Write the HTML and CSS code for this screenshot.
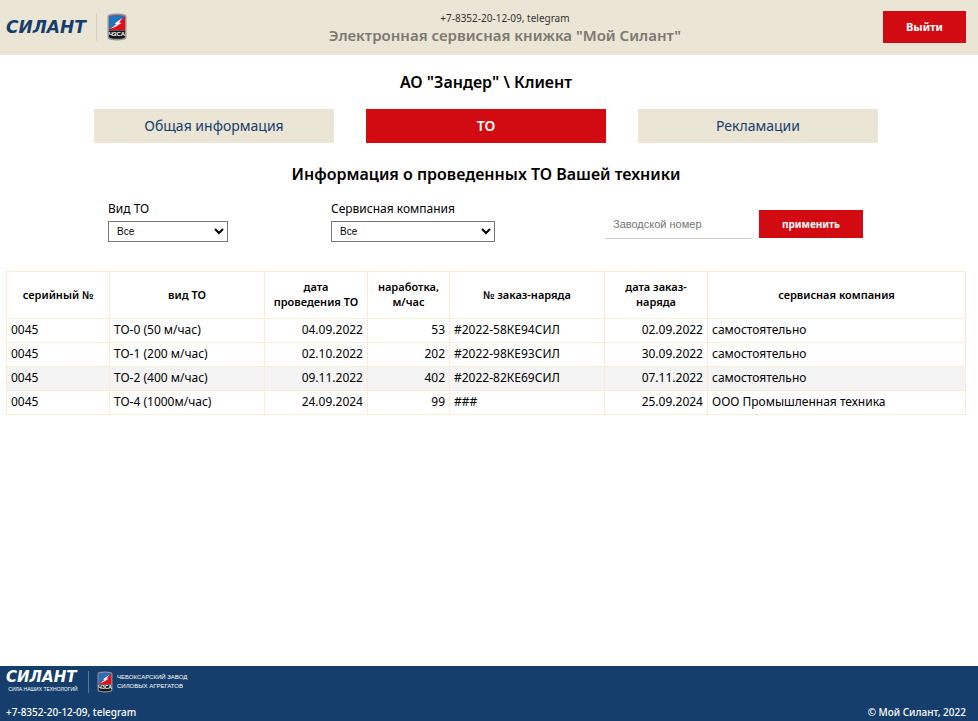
FILE: index.html
```html
<!DOCTYPE html>
<html lang="ru">
<head>
<meta charset="utf-8">
<meta name="viewport" content="width=device-width, initial-scale=1">
<title>Мой Силант</title>
<link rel="stylesheet" href="styles.css">
</head>
<body>
<svg class="defs" aria-hidden="true">
  <symbol id="shield" viewBox="0 0 20 28">
    <path d="M2 1.5Q10-.5 18 1.5Q19.5 2 19.5 4V24Q19.5 26 17.5 26.500Q10 28.500 2.500 26.500Q.5 26 .5 24V4Q.5 2 2 1.500Z" fill="#929496"/>
    <path d="M3 3Q10 1.300 17 3L18 4V17H2V4Z" fill="#e30d1b"/>
    <path d="M3 3Q10 1.300 17 3L17.500 4L2 17V4Z" fill="#2272bd"/>
    <path d="M2 17.500H18V24L17 25Q10 26.700 3 25L2 24Z" fill="#17191b"/>
    <path d="M3.500 16L9.500 11L7.500 10.500L15.500 5L12 9.500L14.500 10L9 13.500Z" fill="#fff"/>
  </symbol>
</svg>
<header class="header">
  <div class="brand">
    <span class="wordmark">СИЛАНТ</span>
    <span class="divider"></span>
    <span class="emblem"><svg><use href="#shield"/></svg><span class="emblem-text">ЧЗСА</span></span>
  </div>
  <div class="service">
    <span class="phone">+7-8352-20-12-09, telegram</span>
    <span class="service-name">Электронная сервисная книжка "Мой Силант"</span>
  </div>
  <button class="button exit" type="button">Выйти</button>
</header>
<main class="main">
  <h1 class="heading">АО "Зандер" \ Клиент</h1>
  <nav class="tabs">
    <button class="tab" type="button">Общая информация</button>
    <button class="tab active" type="button">ТО</button>
    <button class="tab" type="button">Рекламации</button>
  </nav>
  <h2 class="heading">Информация о проведенных ТО Вашей техники</h2>
  <form class="filters">
    <div class="field">
      <label for="kind">Вид ТО</label>
      <select id="kind" class="kind"><option>Все</option></select>
    </div>
    <div class="field">
      <label for="company">Сервисная компания</label>
      <select id="company" class="company"><option>Все</option></select>
    </div>
    <div class="search">
      <input type="text" placeholder="Заводской номер" aria-label="Заводской номер">
      <button class="button apply" type="button">применить</button>
    </div>
  </form>
  <table class="table">
    <colgroup><col class="narrow"><col class="wide"><col class="narrow"><col class="hours"><col class="wide"><col class="narrow"><col></colgroup>
    <thead>
      <tr><th>серийный №</th><th>вид ТО</th><th>дата<br>проведения ТО</th><th>наработка,<br>м/час</th><th>№ заказ-наряда</th><th>дата заказ-<br>наряда</th><th>сервисная компания</th></tr>
    </thead>
    <tbody>
      <tr><td>0045</td><td>ТО-0 (50 м/час)</td><td class="num">04.09.2022</td><td class="num">53</td><td>#2022-58КЕ94СИЛ</td><td class="num">02.09.2022</td><td>самостоятельно</td></tr>
      <tr><td>0045</td><td>ТО-1 (200 м/час)</td><td class="num">02.10.2022</td><td class="num">202</td><td>#2022-98КЕ93СИЛ</td><td class="num">30.09.2022</td><td>самостоятельно</td></tr>
      <tr class="hovered"><td>0045</td><td>ТО-2 (400 м/час)</td><td class="num">09.11.2022</td><td class="num">402</td><td>#2022-82КЕ69СИЛ</td><td class="num">07.11.2022</td><td>самостоятельно</td></tr>
      <tr><td>0045</td><td>ТО-4 (1000м/час)</td><td class="num">24.09.2024</td><td class="num">99</td><td>###</td><td class="num">25.09.2024</td><td>ООО Промышленная техника</td></tr>
    </tbody>
  </table>
</main>
<footer class="footer">
  <div class="footer-brand">
    <span class="footer-logo"><span class="wordmark">СИЛАНТ</span><span class="slogan">СИЛА НАШИХ ТЕХНОЛОГИЙ</span></span>
    <span class="divider"></span>
    <span class="emblem"><svg><use href="#shield"/></svg><span class="emblem-text">ЧЗСА</span></span>
    <span class="factory">ЧЕБОКСАРСКИЙ ЗАВОД<br>СИЛОВЫХ АГРЕГАТОВ</span>
  </div>
  <div class="footer-row"><span>+7-8352-20-12-09, telegram</span><span>© Мой Силант, 2022</span></div>
</footer>
</body>
</html>
```
FILE: styles.css
```css
* { box-sizing: border-box; }
body {
  margin: 0;
  min-height: 100vh;
  display: flex;
  flex-direction: column;
  background: #fff;
  color: #000;
  font: 12px/16px "Noto Sans", sans-serif;
}
button { font-family: inherit; border: 0; cursor: pointer; }
.defs { position: absolute; width: 0; height: 0; }

.header {
  display: flex;
  align-items: center;
  justify-content: space-between;
  min-height: 55px;
  padding: 0 12px 2px 6px;
  background: #ebe5d6;
}
.brand { display: flex; align-items: center; gap: 10px; }
.wordmark {
  color: #163e6c;
  font: italic bold 17px/16px "DejaVu Sans", sans-serif;
}
.divider { width: 1px; height: 28px; background: #d3d0c5; }
.emblem { position: relative; display: block; width: 20px; height: 28px; }
.emblem svg { display: block; width: 100%; height: 100%; }
.emblem-text {
  position: absolute;
  inset: auto 0 4px;
  color: #fff;
  font: bold 6px/6px "Liberation Sans", sans-serif;
  text-align: center;
}
.service { display: flex; flex-direction: column; align-items: center; }
.phone { font-size: 10px; line-height: 16px; color: #333; }
.service-name { font-size: 15px; line-height: 18px; font-weight: 600; color: #7b7972; }
.button { background: #d20a11; color: #fff; font-weight: bold; }
.exit { width: 83px; height: 32px; font-size: 11px; }

.main { flex: 1; padding: 16px 12px 0 6px; }
.heading { margin: 0; font-size: 16px; line-height: 22px; font-weight: 600; text-align: center; }
.tabs { display: flex; justify-content: center; gap: 32px; margin: 16px 0 20px; }
.tab { width: 240px; height: 34px; padding: 0 0 2px; background: #ebe5d6; color: #163e6c; font-size: 14px; }
.tab.active { background: #d20a11; color: #fff; font-weight: 600; }

.filters { display: flex; gap: 103px; align-items: flex-end; margin: 16px 0 29px; padding: 0 103px 0 102px; }
.field { display: flex; flex-direction: column; gap: 4px; }
.field select {
  height: 21px;
  padding: 0 4px;
  border: 1px solid #767676;
  border-radius: 0;
  background: #fff;
  color: #000;
  font: 10px "Liberation Sans", sans-serif;
}
.kind { width: 120px; }
.company { width: 164px; }
.search { display: flex; gap: 8px; align-items: flex-start; margin-left: auto; padding-bottom: 3px; }
.search input {
  width: 146px;
  height: 29px;
  padding: 0 8px;
  border: 0;
  border-bottom: 1px solid #ccc;
  font: 11px "Liberation Sans", sans-serif;
}
.search input::placeholder { color: #757575; }
.apply { width: 104px; height: 28px; font-size: 10px; }

.table { width: 100%; table-layout: fixed; border-collapse: collapse; }
.narrow { width: 103px; }
.wide { width: 155px; }
.hours { width: 82px; }
th, td { border: 1px solid #faebd7; }
th { height: 47px; padding: 0 0 2px; font-size: 11px; line-height: 15px; font-weight: 600; }
td { height: 24px; padding: 0 4px 2px; line-height: 16px; text-align: left; }
.num { text-align: right; }
.hovered { background: #f4f4f4; }

.footer { padding: 4px 12px 1px 6px; background: #163e6c; color: #fff; }
.footer-brand { display: flex; align-items: center; gap: 8px; height: 24px; }
.footer .wordmark { display: block; color: #fff; font-size: 15px; line-height: 14px; }
.footer-logo { width: 74px; }
.slogan { display: block; font: 5px/10px "Liberation Sans", sans-serif; text-align: center; white-space: nowrap; }
.footer .divider { height: 22px; background: #5c7898; }
.footer .emblem { width: 16px; height: 22px; }
.footer .emblem-text { inset: auto 0 3px; font-size: 5px; line-height: 5px; }
.factory { margin-left: -4px; font: 6px/9px "Liberation Sans", sans-serif; white-space: nowrap; }
.footer-row { display: flex; justify-content: space-between; padding-top: 10px; font-size: 10px; font-weight: 500; }
```
